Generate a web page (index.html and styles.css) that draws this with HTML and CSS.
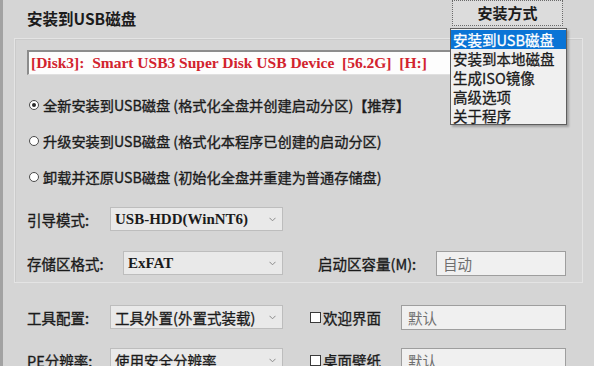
FILE: index.html
```html
<!DOCTYPE html>
<html lang="zh-CN">
<head>
<meta charset="utf-8">
<link rel="stylesheet" href="styles.css">
</head>
<body>
<div class="window">
  <div class="title-row">
    <div class="title">安装到USB磁盘</div>
    <div class="mode">
      <div class="mode-btn">安装方式</div>
      <ul class="menu">
        <li class="sel">安装到USB磁盘</li>
        <li>安装到本地磁盘</li>
        <li>生成ISO镜像</li>
        <li>高级选项</li>
        <li>关于程序</li>
      </ul>
    </div>
  </div>
  <div class="panel">
    <div class="disk">[Disk3]:  Smart USB3 Super Disk USB Device  [56.2G]  [H:]</div>
    <div class="radios">
      <div class="radio-row"><span class="radio on"></span><span>全新安装到USB磁盘 (格式化全盘并创建启动分区)【推荐】</span></div>
      <div class="radio-row"><span class="radio"></span><span>升级安装到USB磁盘 (格式化本程序已创建的启动分区)</span></div>
      <div class="radio-row"><span class="radio"></span><span>卸载并还原USB磁盘 (初始化全盘并重建为普通存储盘)</span></div>
    </div>
    <div class="row row-boot">
      <span class="label w83">引导模式:</span>
      <div class="select w173 serif"><span>USB-HDD(WinNT6)</span><svg class="chev" width="7" height="5" viewBox="0 0 7 5"><path d="M0.5 0.8 L3.5 3.8 L6.5 0.8" fill="none" stroke="#8a8a8a" stroke-width="1"/></svg></div>
    </div>
    <div class="row row-fs">
      <span class="label w96">存储区格式:</span>
      <div class="select w160 serif"><span>ExFAT</span><svg class="chev" width="7" height="5" viewBox="0 0 7 5"><path d="M0.5 0.8 L3.5 3.8 L6.5 0.8" fill="none" stroke="#8a8a8a" stroke-width="1"/></svg></div>
      <span class="label w118 ml35">启动区容量(M):</span>
      <div class="input w130">自动</div>
    </div>
  </div>
  <div class="row row-tools">
    <span class="label w83">工具配置:</span>
    <div class="select w173"><span>工具外置(外置式装载)</span><svg class="chev" width="7" height="5" viewBox="0 0 7 5"><path d="M0.5 0.8 L3.5 3.8 L6.5 0.8" fill="none" stroke="#8a8a8a" stroke-width="1"/></svg></div>
    <span class="check"></span>
    <span class="label w78">欢迎界面</span>
    <div class="input w165">默认</div>
  </div>
  <div class="row row-pe">
    <span class="label w83">PE分辨率:</span>
    <div class="select w173"><span>使用安全分辨率</span><svg class="chev" width="7" height="5" viewBox="0 0 7 5"><path d="M0.5 0.8 L3.5 3.8 L6.5 0.8" fill="none" stroke="#8a8a8a" stroke-width="1"/></svg></div>
    <span class="check"></span>
    <span class="label w78">桌面壁纸</span>
    <div class="input w165">默认</div>
  </div>
</div>
</body>
</html>
```
FILE: styles.css
```css
* { box-sizing: border-box; }
html, body { margin: 0; padding: 0; }
body {
  background: #d4d4d4;
  font-family: "Noto Sans CJK SC", "Noto Sans", sans-serif;
  font-size: 14px;
  color: #1b1b1b;
}
.window {
  width: 594px;
  height: 366px;
  overflow: hidden;
  border-left: 3px solid #a2a2a2;
  background: #d5d5d5;
}
.title-row {
  display: flex;
  align-items: flex-start;
  height: 38px;
}
.title {
  padding: 7px 0 0 24px;
  font-size: 15.5px;
  font-weight: 700;
  line-height: 22px;
}
.mode {
  position: relative;
  margin-left: auto;
  margin-right: 31px;
  width: 111px;
}
.mode-btn {
  height: 26px;
  border: 1px dotted #6a6a6a;
  background: #dcdcdc;
  text-align: center;
  font-size: 15px;
  font-weight: 700;
  line-height: 24px;
}
.menu {
  position: absolute;
  top: 28px;
  left: -2px;
  width: 117px;
  height: 97px;
  margin: 0;
  padding: 1px 0;
  list-style: none;
  background: #f0f0f0;
  border: 1px solid #5e5e5e;
  box-shadow: 2px 2px 2px rgba(0,0,0,0.25);
  z-index: 5;
}
.menu li {
  height: 19px;
  line-height: 19px;
  padding-left: 2px;
  font-size: 14.5px;
  -webkit-text-stroke: 0.3px currentColor;
  white-space: nowrap;
}
.menu li.sel {
  background: #0a74d6;
  color: #fff;
}
.panel {
  margin-left: 11px;
  width: 569px;
  height: 245px;
  border: 1px solid #e4e4e4;
  box-shadow: inset 1px 1px 0 #cbcbcb;
  padding-top: 11px;
}
.disk {
  margin-left: 12px;
  width: 539px;
  height: 25px;
  background: #fdfdfd;
  border-top: 2px solid #8c8c8c;
  border-left: 2px solid #8c8c8c;
  border-right: 1px solid #e0e0e0;
  border-bottom: 1px solid #e0e0e0;
  padding-left: 2px;
  font-family: "Liberation Serif", serif;
  font-weight: 700;
  font-size: 15.5px;
  line-height: 21px;
  color: #d2232e;
  white-space: pre;
  overflow: hidden;
}
.radios { margin-top: 12px; }
.radio-row {
  display: flex;
  align-items: center;
  height: 36px;
  padding-left: 14px;
  gap: 4px;
  font-size: 14.2px;
  -webkit-text-stroke: 0.35px currentColor;
  white-space: nowrap;
}
.radio {
  width: 10px;
  height: 10px;
  border: 1px solid #4a4a4a;
  border-radius: 50%;
  background: #fff;
  display: flex;
  align-items: center;
  justify-content: center;
  flex: none;
  -webkit-text-stroke: 0;
}
.radio.on::after {
  content: "";
  width: 4px;
  height: 4px;
  border-radius: 50%;
  background: #2a2a2a;
}
.row {
  display: flex;
  align-items: center;
  height: 24px;
  padding-left: 12px;
  white-space: nowrap;
}
.row-boot { margin-top: 12px; }
.row-fs { margin-top: 20px; }
.row-tools { margin-top: 22px; padding-left: 24px; }
.row-pe { margin-top: 19px; padding-left: 24px; }
.label {
  font-size: 14.5px;
  -webkit-text-stroke: 0.35px currentColor;
  flex: none;
}
.w83 { width: 83px; }
.w96 { width: 96px; }
.w118 { width: 118px; }
.w78 { width: 78px; }
.ml35 { margin-left: 35px; }
.select {
  display: flex;
  align-items: center;
  justify-content: space-between;
  height: 24px;
  padding: 0 6px 0 4px;
  background: #e9e9e9;
  border: 1px solid #bdbdbd;
  font-size: 14.5px;
  -webkit-text-stroke: 0.3px currentColor;
  flex: none;
}
.select.serif span {
  font-family: "Liberation Serif", serif;
  font-weight: 700;
  font-size: 15px;
  -webkit-text-stroke: 0;
}
.w173 { width: 173px; }
.w160 { width: 160px; }
.w130 { width: 130px; }
.w165 { width: 165px; }
.chev { flex: none; }
.input {
  height: 25px;
  background: #f0f0f0;
  border: 1px solid #9e9e9e;
  padding-left: 6px;
  line-height: 23px;
  color: #6f6f6f;
  font-size: 14.5px;
  flex: none;
}
.check {
  width: 11px;
  height: 11px;
  margin-left: 27px;
  margin-right: 2px;
  border: 1px solid #3a3a3a;
  background: #fff;
  flex: none;
}
```
